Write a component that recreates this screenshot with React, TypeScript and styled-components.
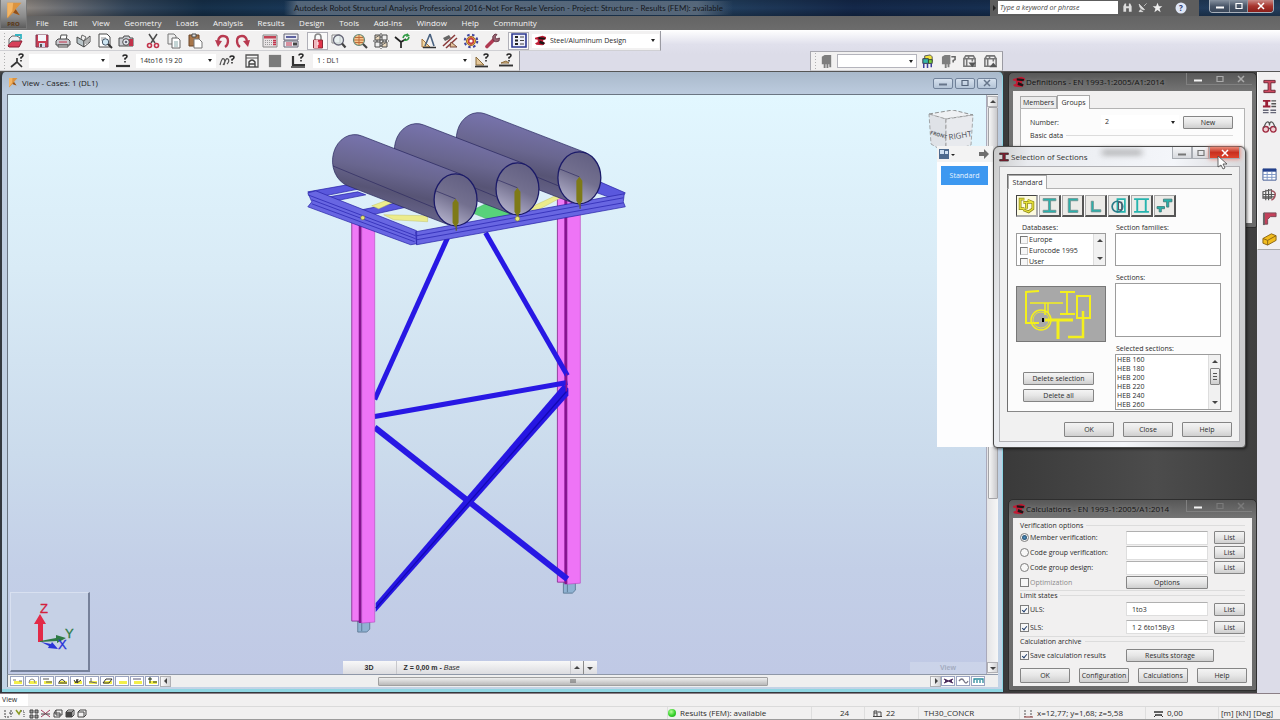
import React from "react";
import styled, { createGlobalStyle, css } from "styled-components";

const Global = createGlobalStyle`
  *, *::before, *::after { box-sizing: border-box; }
  body {
    margin: 0;
    background: #dcdce8;
    color: #2c2c2c;
    font-family: "Open Sans", "Noto Sans", sans-serif;
    font-size: 8px;
    line-height: 10px;
  }
  button, input, select { font: inherit; color: inherit; margin: 0; }
`;

/* ---------- page frame ---------- */

const Page = styled.div`
  display: flex;
  flex-direction: column;
  min-height: 100vh;
  overflow: hidden;
`;

const Header = styled.header`
  display: flex;
  background: linear-gradient(#5b5b5b, #6c6c6c);
`;

const LogoButton = styled.button`
  display: flex;
  flex-direction: column;
  align-items: center;
  width: 27px;
  height: 29px;
  padding: 1px 0 0;
  border: 1px solid #777;
  border-top: 0;
  background: linear-gradient(#b4b4b4, #8a8a8a 60%, #5c5c5c);
  color: #5a3512;
  font-size: 6px;
  font-weight: 700;
  line-height: 6px;
  flex: none;
`;

const HeaderMain = styled.div`
  flex: 1;
  min-width: 0;
`;

const TitleBar = styled.div`
  display: flex;
  height: 16px;
  background: linear-gradient(rgba(0, 0, 0, 0.15), rgba(0, 0, 0, 0) 50%, rgba(0, 0, 0, 0.25)),
    linear-gradient(90deg, #8b8580, #5f6670 4%, #34475c 8%, #16304a 14%, #1a3a5c 24%, #23405f 55%, #14284a 66%, #173153 80%, #26405f);
`;

const AppTitle = styled.h1`
  flex: 1;
  margin: 0;
  font-family: Lato, sans-serif;
  font-size: 8px;
  font-weight: 400;
  line-height: 16px;
  text-align: center;
  white-space: nowrap;
  overflow: hidden;
  color: #14171b;
  span {
    padding: 2px 10px;
    background: linear-gradient(90deg, rgba(100, 116, 134, 0), rgba(104, 118, 134, 0.75) 3%, rgba(104, 118, 134, 0.75) 92%, rgba(100, 116, 134, 0));
  }
`;

const SearchStrip = styled.div`
  display: flex;
  align-items: center;
  width: 209px;
  padding-bottom: 1px;
  background: #5d5d5d;
  color: #eee;
  svg + svg, input + svg { margin-left: 4px; }
  svg:last-child { margin-left: 12px; }
`;

const SearchInput = styled.input`
  width: 120px;
  height: 13px;
  padding: 0 2px;
  border: 0;
  background: #fff;
  color: #333;
  font-size: 7px;
  font-style: italic;
  &::placeholder { color: #444; opacity: 1; }
`;

const CaptionGroup = styled.div`
  display: flex;
  height: 13px;
  margin: 0 6px 0 10px;
  border: 1px solid #a8b0ba;
  border-top: 0;
  border-radius: 0 0 4px 4px;
  overflow: hidden;
`;

const CaptionButton = styled.button<{ $w?: number; $red?: boolean }>`
  display: flex;
  align-items: center;
  justify-content: center;
  width: ${(p) => p.$w ?? 18}px;
  padding: 0;
  border: 0;
  border-right: 1px solid #8b949e;
  background: ${(p) => (p.$red ? "linear-gradient(#c98a86, #a8362f 50%, #8a1d18)" : "linear-gradient(#8792a0, #4a5769 50%, #3a475a)")};
  &:last-child { border-right: 0; }
`;

const MenuBar = styled.nav`
  display: flex;
  align-items: center;
  justify-content: space-between;
  width: 517px;
  height: 14px;
  padding-left: 2px;
  a {
    padding: 0 7px;
    color: #f4f4f4;
    text-decoration: none;
    white-space: nowrap;
  }
`;

const ToolbarArea = styled.div`
  background: linear-gradient(#fff, #e0e0ec 35%, #dcdce8 60%);
  border-bottom: 1px solid #555;
  padding-top: 1px;
  font-size: 7px;
`;

const ToolbarLine = styled.div`
  display: flex;
  justify-content: flex-start;
`;

const Toolbar = styled.div`
  display: flex;
  align-items: center;
  height: 20px;
  padding: 0 1px 0 4px;
  background: #f2f1f1;
  border-right: 1px solid #9a9aa2;
  border-bottom: 1px solid #d0d0d4;
  &::before {
    content: "";
    width: 1px;
    height: 16px;
    margin-right: -1px;
    background: repeating-linear-gradient(#b0b0b0 0 1px, transparent 1px 3px);
  }
`;

const DisplayToolbar = styled(Toolbar)`
  margin-left: auto;
  margin-right: 277px;
  border-left: 1px solid #a8a8b0;
  border-top: 1px solid #a8a8b0;
`;

const ToolGroup = styled.div`
  display: flex;
  & + & { margin-left: 6px; }
`;

const ToolButton = styled.button<{ $on?: boolean; $w?: number }>`
  display: flex;
  align-items: center;
  justify-content: center;
  width: ${(p) => p.$w ?? 21}px;
  height: 18px;
  padding: 0;
  border: 1px solid ${(p) => (p.$on ? "#b0b0b8" : "transparent")};
  background: ${(p) => (p.$on ? "#fafafa" : "transparent")};
  flex: none;
`;

const Combo = styled.div<{ $w: number; $framed?: boolean }>`
  display: grid;
  align-items: center;
  width: ${(p) => p.$w}px;
  height: 14px;
  background: #fff;
  border: 1px solid ${(p) => (p.$framed ? "#b4b4bc" : "#fff")};
  select {
    grid-area: 1 / 1;
    width: 100%;
    height: 12px;
    padding: 0 12px 0 3px;
    border: 0;
    appearance: none;
    background: transparent;
    line-height: 12px;
  }
  &::after {
    content: "";
    grid-area: 1 / 1;
    justify-self: end;
    margin-right: 3px;
    border: 2px solid transparent;
    border-top: 3px solid #222;
    border-bottom: 0;
    pointer-events: none;
  }
`;

const ModuleCombo = styled.div`
  display: flex;
  align-items: center;
  padding-left: 3px;
  margin-left: 3px;
  background: #fff;
`;

const Workspace = styled.main`
  position: relative;
  display: flex;
  flex: 1;
  background: #454545;
`;

/* ---------- 3D view window ---------- */

const ViewWindow = styled.section`
  display: flex;
  flex-direction: column;
  flex: 1;
  min-width: 0;
  padding: 0 5px 3px 5px;
  border: 1px solid #33383e;
  border-width: 0 1px 1px 2px;
  border-radius: 5px 5px 0 0;
  background: linear-gradient(#a9b9cb, #bccbde 22px, #c3d3e6);
  box-shadow: inset 0 -3px 0 #8fd6e2, inset -1px 0 0 #8fd6e2;
`;

const ViewCaption = styled.div`
  display: flex;
  align-items: center;
  height: 22px;
  padding-right: 2px;
  gap: 3px;
  color: #1d1d1d;
  h2 { flex: 1; margin: 0; font-size: 8px; font-weight: 400; }
`;

const ViewCaptionButton = styled.button`
  display: flex;
  align-items: center;
  justify-content: center;
  width: 20px;
  height: 11px;
  margin-right: -1px;
  padding: 0;
  border: 1px solid #71829a;
  border-radius: 2px;
  background: linear-gradient(#d6e1ee, #b4c4d7);
`;

const ViewBody = styled.div`
  display: flex;
  flex: 1;
  min-height: 300px;
  border-top: 1px solid #6b7683;
  border-left: 1px solid #6b7683;
`;

const Canvas = styled.div`
  position: relative;
  flex: 1;
  min-width: 0;
  background: linear-gradient(#e2f7ff, #d9ebf6 30%, #cbdbec 62%, #c3cfe7 82%, #c0c9e5);
`;

const Model = styled.svg`
  position: absolute;
  inset: 0;
  width: 100%;
  height: 100%;
`;

const CubeHolder = styled.div`
  position: absolute;
  top: 15px;
  right: 11px;
`;

const AxisPanel = styled.div`
  position: absolute;
  left: 2px;
  bottom: 2px;
  width: 80px;
  height: 80px;
  border: 1px solid #d8e0f0;
  border-right: 2px solid #76819a;
  border-bottom: 2px solid #76819a;
  background: #c6d1e6;
`;

const LevelBar = styled.div`
  position: absolute;
  left: 34%;
  bottom: 0;
  display: flex;
  align-items: stretch;
  height: 13px;
  margin-left: 2px;
  line-height: 13px;
  background: linear-gradient(#f8f8f8, #dcdce0);
  font-family: "Liberation Sans", sans-serif;
  font-size: 7px;
  font-weight: 700;
`;

const LevelCell = styled.span<{ $w: number }>`
  width: ${(p) => p.$w}px;
  padding-left: 7px;
  border-right: 1px solid #c8c8cc;
  i { font-weight: 400; }
  &:first-child { text-align: center; padding: 0; }
`;

const StepButton = styled.button`
  display: flex;
  align-items: center;
  justify-content: center;
  width: 13px;
  padding: 0;
  border: 0;
  border-right: 1px solid #8a8a8a;
  background: transparent;
  &:last-child { border-right: 0; }
`;

const ViewTag = styled.div`
  position: absolute;
  right: 0;
  bottom: 0;
  width: 76px;
  line-height: 12px;
  text-align: center;
  background: rgba(214, 221, 238, 0.5);
  color: #a3abc0;
  font-family: "Liberation Sans", sans-serif;
  font-size: 7px;
  font-weight: 700;
`;

const VScroll = styled.div`
  display: flex;
  flex-direction: column;
  align-items: center;
  width: 12px;
  padding: 1px 0;
  border-left: 1px solid #aab;
  background: linear-gradient(90deg, #e4e4e6, #f6f6f6);
`;

const VThumb = styled.div`
  width: 10px;
  height: 68%;
  margin-bottom: auto;
  border: 1px solid #a4a4a8;
  border-radius: 1px;
  background: linear-gradient(90deg, #f6f6f6, #c9c9cc);
`;

const ScrollButton = styled.button`
  display: flex;
  align-items: center;
  justify-content: center;
  width: 11px;
  height: 11px;
  padding: 0;
  border: 1px solid #b0b0b4;
  background: linear-gradient(90deg, #fafafa, #d4d4d6);
  flex: none;
`;

const ViewFooter = styled.div`
  display: flex;
  align-items: center;
  height: 13px;
  margin-bottom: 2px;
  padding: 0 12px 0 2px;
  border-top: 1px solid #8f98a8;
  border-left: 1px solid #6b7683;
  background: #efefef;
`;

const DisplayToggle = styled.button`
  display: flex;
  align-items: center;
  justify-content: center;
  width: 14px;
  height: 10px;
  margin-right: 1px;
  padding: 0;
  border: 1px solid #9aa3c0;
  background: #fff;
  flex: none;
`;

const HTrack = styled.div`
  display: flex;
  flex: 1;
  justify-content: center;
  padding: 0 4px;
`;

const HThumb = styled.div`
  display: flex;
  align-items: center;
  justify-content: center;
  width: 52%;
  height: 9px;
  margin-left: 6%;
  border: 1px solid #a0a0a0;
  border-radius: 1px;
  background: linear-gradient(#eeeeee, #b9b9b9);
`;

/* ---------- dialogs ---------- */

const Dock = styled.aside`
  display: flex;
  flex-direction: column;
  justify-content: space-between;
  width: 253px;
  padding: 0 0 2px 4px;
  background: linear-gradient(90deg, #3a3a3a, #4c4c4c 60%, #3f3f3f);
`;

const DarkWindow = styled.section<{ $h: number }>`
  display: flex;
  flex-direction: column;
  min-height: ${(p) => p.$h}px;
  padding: 0 4px 4px;
  border: 1px solid #2e2e2e;
  border-radius: 5px 5px 2px 2px;
  background: linear-gradient(#585858, #747474 18px, #6a6a6a);
`;

const DarkCaption = styled.div`
  display: flex;
  align-items: center;
  gap: 1px;
  height: 18px;
  color: #121212;
  h2 { flex: 1; margin: 0; font-size: 8px; font-weight: 400; text-shadow: 0 0 4px #9c9c9c; }
`;

const DarkButtons = styled.div`
  display: flex;
  align-self: flex-start;
  width: 66px;
  height: 12px;
  border: 1px solid #808080;
  border-top: 0;
  border-right: 0;
`;

const BareButton = styled.button`
  display: flex;
  align-items: center;
  justify-content: center;
  flex: 1;
  padding: 0;
  border: 0;
  background: none;
`;

const WindowBody = styled.div`
  display: flex;
  flex-direction: column;
  flex: 1;
  padding: 3px 7px;
  background: #f1f0f0;
  font-size: 7px;
  line-height: 9px;
`;

const Tabs = styled.div`
  display: flex;
  align-items: flex-end;
`;

const WindowTabs = styled(Tabs)`
  padding-top: 1px;
`;

const Tab = styled.button<{ $active?: boolean; $w: number }>`
  width: ${(p) => p.$w}px;
  height: ${(p) => (p.$active ? 14 : 12)}px;
  margin-bottom: ${(p) => (p.$active ? -1 : 0)}px;
  padding: 0;
  border: 1px solid #a9a9a9;
  border-bottom: 0;
  background: ${(p) => (p.$active ? "#fcfcfc" : "#ececec")};
  line-height: 11px;
  z-index: 1;
`;

const Panel = styled.div`
  display: flex;
  flex-direction: column;
  gap: 2px;
  flex: 1;
  padding: 6px 11px 6px 9px;
  border: 1px solid #b3b3b3;
  background: #fcfcfc;
`;

const FormLine = styled.div`
  display: flex;
  align-items: center;
  gap: 4px;
  height: 14px;
  label { flex: 1; }
`;

const buttonLook = css`
  border: 1px solid #858585;
  border-radius: 1px;
  background: linear-gradient(#f4f4f4, #e6e6e6 50%, #cfcfcf);
`;

const PushButton = styled.button<{ $w?: number; $h?: number }>`
  ${buttonLook}
  width: ${(p) => p.$w ?? 50}px;
  height: ${(p) => p.$h ?? 13}px;
  padding: 0;
  line-height: 9px;
  white-space: nowrap;
  flex: none;
`;

const Legend = styled.h3`
  display: flex;
  align-items: center;
  gap: 3px;
  margin: 0;
  font-size: 7px;
  font-weight: 400;
  &::after { content: ""; flex: 1; border-top: 1px solid #dcdcdc; }
`;

const Field = styled.input`
  width: 82px;
  height: 14px;
  padding: 0 5px;
  border: 1px solid #dedede;
  border-top-color: #b0b0b0;
  background: #fff;
`;

const CheckBox = styled.input`
  width: 9px;
  height: 9px;
  margin-right: 1px;
  appearance: none;
  border: 1px solid #7d7d7d;
  background: #f7f7f7;
  flex: none;
  display: grid;
  place-items: center;
  &:checked::before {
    content: "";
    width: 3px;
    height: 5px;
    border: solid #23406e;
    border-width: 0 1px 1px 0;
    transform: rotate(40deg);
  }
`;

const ListCheck = styled(CheckBox)`
  width: 8px;
  height: 8px;
  margin: 0 0 0 2px;
  border-color: #777 #ccc #ccc #777;
`;

const RadioDot = styled(CheckBox)`
  border-radius: 50%;
  &:checked::before {
    width: 5px;
    height: 5px;
    border: 0;
    border-radius: 50%;
    background: radial-gradient(#4f93c4, #16324f);
    transform: none;
  }
`;

const CalcRow = styled.div<{ $h?: number }>`
  display: grid;
  grid-template-columns: 1fr 82px 31px;
  column-gap: 6px;
  align-items: center;
  height: ${(p) => p.$h ?? 15}px;
`;

const OptionLabel = styled.label<{ $off?: boolean }>`
  display: flex;
  align-items: center;
  color: ${(p) => (p.$off ? "#8b8b8b" : "inherit")};
`;

const WideRow = styled(CalcRow)`
  grid-template-columns: 1fr 88px;
  padding-right: 31px;
`;

const Separator = styled.hr`
  width: 100%;
  margin: 0;
  border: 0;
  border-top: 1px solid #dcdcdc;
`;

const ButtonRow = styled.div`
  display: flex;
  justify-content: space-between;
  gap: 9px;
`;

const DialogButtons = styled(ButtonRow)`
  justify-content: flex-end;
  padding-top: 10px;
`;

const SectionsDialog = styled.section`
  position: absolute;
  top: 74px;
  right: 34px;
  width: 253px;
  padding: 0 5px 5px;
  border: 1px solid #4a4a4a;
  border-radius: 6px 6px 4px 4px;
  background: linear-gradient(100deg, #c9c9c9, #e9ebef 12%, #f4f6fa 60%, #c4c4c6);
  box-shadow: 1px 1px 3px rgba(0, 0, 0, 0.6);
`;

const GlassCaption = styled.div`
  display: flex;
  align-items: center;
  gap: 2px;
  height: 19px;
  h2 { flex: 1; margin: 0; font-size: 8px; font-weight: 400; color: #333; }
`;

const GlassSmudge = styled.div`
  width: 40px;
  height: 3px;
  margin: 0 28px 8px 0;
  background: #777;
  filter: blur(3px);
`;

const GlassButtons = styled.div`
  display: flex;
  align-self: flex-start;
  height: 12px;
`;

const GlassButton = styled.button<{ $w: number; $red?: boolean }>`
  display: flex;
  align-items: center;
  justify-content: center;
  width: ${(p) => p.$w}px;
  padding: 0;
  border: 1px solid #a8acb2;
  border-top: 0;
  background: ${(p) => (p.$red ? "linear-gradient(#e88a78, #c8301f 50%, #e0452c)" : "linear-gradient(#f4f5f7, #d8dade)")};
  box-shadow: ${(p) => (p.$red ? "0 0 4px #f08070" : "none")};
`;

const DialogBody = styled.div`
  padding: 7px 7px 4px;
  border: 1px solid #b0b0b4;
  background: #f1f1f1;
  font-size: 7px;
  line-height: 9px;
`;

const DialogPanel = styled.div`
  display: grid;
  grid-template-columns: 90px 106px;
  column-gap: 9px;
  padding: 6px 8px 1px;
  border: 1px solid #b3b3b3;
  border-left: 1px solid #707070;
  border-bottom-color: #888;
  background: #fcfcfc;
`;

const DialogTabs = styled(Tabs)`
  border-top: 1px solid #666;
  border-left: 1px solid #707070;
`;

const TypeButtons = styled.div`
  grid-column: 1 / -1;
  display: flex;
  gap: 1px;
  margin-bottom: 6px;
`;

const TypeButton = styled.button<{ $on?: boolean }>`
  display: flex;
  align-items: center;
  justify-content: center;
  width: 22px;
  height: 22px;
  padding: 0;
  border: 1px solid #555;
  border-color: ${(p) => (p.$on ? "#444 #aaa #aaa #444" : "#aaa #555 #555 #aaa")};
  border-width: 1px 2px 2px 1px;
  background: ${(p) => (p.$on ? "#fdfbe0" : "#ecebe8")};
`;

const Column = styled.div`
  display: flex;
  flex-direction: column;
`;

const Caption = styled.div<{ $indent?: number }>`
  height: 10px;
  padding-left: ${(p) => p.$indent ?? 1}px;
`;

const ListBox = styled.div<{ $h: number }>`
  display: flex;
  height: ${(p) => p.$h}px;
  margin-bottom: 7px;
  border: 1px solid #9c9c9c;
  background: #fff;
  overflow: hidden;
  &:last-child { margin-bottom: 0; }
  ul { flex: 1; margin: 0; padding: 0 1px; list-style: none; }
`;

const CheckItem = styled.label`
  display: flex;
  align-items: center;
  gap: 1px;
  height: 11px;
`;

const MiniScroll = styled.div`
  display: flex;
  flex-direction: column;
  align-items: center;
  width: 12px;
  padding: 3px 0;
  border-left: 1px solid #ddd;
  background: #f1f1f1;
  gap: 2px;
`;

const MiniThumb = styled.div`
  ${buttonLook}
  width: 10px;
  height: 17px;
  padding: 4px 2px;
  &::before {
    content: "";
    display: block;
    height: 7px;
    background: repeating-linear-gradient(#555 0 1px, transparent 1px 3px);
  }
`;

const Grow = styled.div`
  flex: 1;
`;

const Preview = styled.div`
  height: 56px;
  margin: 13px 0 30px;
  border: 1px solid #777;
  background: #a8a8a8;
`;

const DeleteButtons = styled.div`
  display: flex;
  flex-direction: column;
  gap: 4px;
  padding-left: 7px;
`;

const Flyout = styled.div`
  position: absolute;
  top: 74px;
  right: 287px;
  width: 56px;
  height: 301px;
  background: #fdfdfe;
`;

const FlyoutHead = styled.div`
  display: flex;
  align-items: center;
  justify-content: space-between;
  height: 16px;
  padding: 0 4px 0 2px;
  background: #f3f3f3;
`;

const FlyoutItem = styled.button`
  display: block;
  width: 47px;
  height: 19px;
  margin: 4px 0 0 4px;
  padding: 0;
  border: 0;
  background: #3d98f0;
  color: #e8f4ff;
  font-size: 7px;
`;

const Pointer = styled.svg`
  position: absolute;
  top: 84px;
  right: 52px;
  width: 11px;
  height: 14px;
`;

/* ---------- right toolbar and status ---------- */

const SideBar = styled.aside`
  width: 23px;
  background: #dcdce8;
`;

const SideTools = styled.div`
  display: flex;
  flex-direction: column;
  align-items: center;
  padding: 4px 0 1px;
  background: #f1f0f1;
  border-left: 1px solid #fff;
  border-bottom: 1px solid #aaa;
`;

const SideGroup = styled.div<{ $gap?: number }>`
  display: flex;
  flex-direction: column;
  margin-bottom: ${(p) => p.$gap ?? 0}px;
  button { height: 20px; }
`;

const StatusArea = styled.footer`
  background: #f1f0f0;
  border-top: 1px solid #8b7f86;
  border-bottom: 1px solid #9b9b9b;
`;

const ViewTabs = styled.div`
  display: flex;
  height: 13px;
  border-bottom: 1px solid #dadada;
  button {
    width: 28px;
    padding: 0 0 0 2px;
    border: 0;
    background: #fff;
    text-align: left;
    font-size: 7px;
  }
`;

const StatusLine = styled.div`
  display: flex;
  align-items: center;
  height: 12px;
  padding-left: 4px;
`;

const StatusCell = styled.span<{ $w: number; $pad?: number }>`
  display: flex;
  align-items: center;
  gap: 4px;
  width: ${(p) => p.$w}px;
  height: 12px;
  padding-left: ${(p) => p.$pad ?? 4}px;
  border-left: 1px solid #dedede;
  white-space: nowrap;
`;

const Led = styled.i`
  width: 8px;
  height: 8px;
  border-radius: 50%;
  background: radial-gradient(circle at 40% 35%, #b6ff9a, #35d02a 55%, #1d9a1a);
`;

/* ---------- icons ---------- */

const D = "#4b4b4b";
const R = "#c2324a";
const T = "#25b4ae";

const question = (x: number, y: number) => (
  <g stroke="#222" fill="none" strokeWidth="1.5">
    <path d={`M${x} ${y + 1.5}q0-1.5 2-1.5t2 1.5q0 1.2-2 2v1.2`} />
    <path d={`M${x + 2} ${y + 6}v1.5`} />
  </g>
);

const drawings: Record<string, React.ReactNode> = {
  open: (<><path d="M1 13l3-5h11l-3 6H2z" fill="#d8405a" stroke="#8d1c32" /><path d="M2 11V6l3-3h5l3 2v3H5z" fill="#eef0f4" stroke="#666" /><path d="M8 2h6v4" fill="none" stroke="#35b4c2" strokeWidth="1.800" /></>),
  save: (<><path d="M2 2h12v12H2z" fill="#c93d52" stroke="#7c3a55" /><path d="M4 2h8v6H4z" fill="#f4f6fa" /><path d="M5 10h6v4H5z" fill="#d5dcec" /><path d="M6 11h2v3H6z" fill="#555" /></>),
  print: (<><path d="M5 7l1-5h6l-1 5" fill="#fff" stroke={D} /><path d="M1 8l2-2h10l2 2v4H1z" fill="#c9c9ce" stroke={D} /><path d="M3 12h10v2H3z" fill="#eee" stroke={D} /><path d="M4 9h8" stroke={R} /></>),
  book: (<><path d="M1 4l7 4v6l-7-4z" fill="#b9c4c8" stroke={D} /><path d="M8 8l6-5v6l-6 5z" fill="#fff" stroke={D} /><path d="M5 6l1-4 4 2-2 4M10 6v5M12 5v5" fill="none" stroke="#666" /></>),
  preview: (<><path d="M2 1h8l3 3v10H2z" fill="#fff" stroke={D} /><path d="M4 5h5M4 7h3" stroke="#999" /><circle cx="8.500" cy="9" r="3.200" fill="#cfe6f2" stroke="#456" /><path d="M11 11l4 4" stroke="#333" strokeWidth="2" /></>),
  camera: (<><path d="M1 5h4l1-2h5l1 2h3v8H1z" fill="#c9ccd2" stroke={D} /><path d="M11 6h4v7h-4z" fill={R} /><circle cx="8" cy="9" r="3.300" fill="#e9edf2" stroke={D} /><circle cx="8" cy="9" r="1.300" fill="#667" /></>),
  cut: (<><path d="M4 1l6 9M12 1L6 10" stroke={D} strokeWidth="1.500" /><circle cx="4.500" cy="12.500" r="2" fill="none" stroke={R} strokeWidth="1.600" /><circle cx="11.500" cy="12.500" r="2" fill="none" stroke={R} strokeWidth="1.600" /></>),
  copy: (<><path d="M2 1h6l2 2v8H2z" fill="#eee" stroke="#777" /><path d="M6 5h6l2 2v8H6z" fill="#fff" stroke="#666" /><path d="M8 9h4M8 11h4M8 13h4" stroke="#8aa" /></>),
  paste: (<><path d="M2 2h10v11H2z" fill="#a8764a" stroke="#6a4526" /><path d="M5 1h4v3H5z" fill="#ddd" stroke={D} /><path d="M7 6h5l3 3v6H7z" fill="#fff" stroke="#777" /></>),
  undo: (<><path d="M4 8q1-5 5-5 5 0 5 5 0 4-3 6" fill="none" stroke="#b83a50" strokeWidth="2.300" /><path d="M1 7l7 1-4 6z" fill="#b83a50" /></>),
  redo: (<><path d="M12 8q-1-5-5-5-5 0-5 5 0 4 3 6" fill="none" stroke="#b83a50" strokeWidth="2.300" /><path d="M15 7l-7 1 5 6z" fill="#b83a50" /></>),
  calc: (<><path d="M1 2h14v12H1z" fill="#e7e3e4" stroke="#888" /><path d="M2 3h12v2.500H2z" fill="#c24355" /><path d="M3 7.500h7M3 9.500h7M3 11.500h7" stroke="#999" strokeDasharray="1 1" /><path d="M11 7.500h3M11 9.500h3M11 11.500h3" stroke={R} strokeWidth="1.400" /></>),
  calcList: (<><path d="M1 1h14v6H1zM1 8h14v6H1z" fill="#ececf2" stroke="#667" /><path d="M3 4h10" stroke="#5d62a0" strokeWidth="2" /><path d="M3 10h6M3 12h6" stroke={R} /><path d="M10 11h4" stroke="#444" strokeWidth="3" /></>),
  lock: (<><path d="M5 8V4q0-3 3-3t3 3v4" fill="none" stroke="#888" strokeWidth="1.600" /><path d="M3.500 7h9v8h-9z" fill="#e0344a" stroke="#8c2a36" /><path d="M4 7h4v8H4z" fill="#f0b8be" /><path d="M8 9v3" stroke="#fff" /></>),
  zoom: (<><path d="M1 2h8v8H1z" fill="#fff" stroke="#888" /><circle cx="7.500" cy="7" r="5" fill="#dfeaea" fillOpacity=".7" stroke="#667" strokeWidth="1.300" /><path d="M11 10.500l3.500 4" stroke="#444" strokeWidth="2.200" /></>),
  zoomAll: (<><circle cx="7" cy="7" r="5.500" fill="#f3c88f" stroke="#687" strokeWidth="1.200" /><path d="M2 7h10M7 2v10M3 4.500h8M3 9.500h8" stroke="#c06a3a" /><path d="M11 11l4 4" stroke="#444" strokeWidth="2.200" /></>),
  planes: (<><path d="M2 2h5v5H2zM9 9h5v5H9z" fill="#ead8bc" stroke={D} /><path d="M9 2h5v5H9zM2 9h5v5H2z" fill="#eee" stroke={D} /><path d="M0 8h16M8 0v16" stroke="#444" strokeDasharray="2 1" /><path d="M2 5l5-3M9 12l5-3" stroke="#666" /></>),
  rotate: (<><path d="M1 4l6 5v6M7 9l5-3" stroke="#222" strokeWidth="1.700" fill="none" /><path d="M9 5q1-4 5-3M15 4q-1 4-5 3" stroke="#2f9a43" strokeWidth="1.600" fill="none" /><path d="M13 0l3 3-4 1z" fill="#2f9a43" /></>),
  drafting: (<><path d="M1 14V6l8 8z" fill="#f3d9a4" stroke="#a6743c" /><path d="M9 1l-5 12M9 1l4 12" stroke="#4a6280" strokeWidth="1.600" /><path d="M2 14.500h13" stroke="#333" strokeWidth="1.500" /></>),
  frames: (<><path d="M1 13L13 2M4 15L15 5" stroke="#8a3b3b" strokeWidth="1.600" /><path d="M1 5l6-3 2 3-6 3z" fill="#666" /><path d="M9 9l6 5H8z" fill="#e2c39b" stroke="#7a4a3a" /></>),
  gears: (<><circle cx="8" cy="8" r="4.500" fill="#f0b53c" stroke="#a06424" /><circle cx="8" cy="8" r="6.300" fill="none" stroke="#40459c" strokeWidth="2" strokeDasharray="2.500 2.500" /><path d="M5 6l3-2 3 2v4l-3 2-3-2z" fill="#c23d48" /><circle cx="8" cy="8" r="1.600" fill="#fff" /></>),
  wrench: (<><path d="M3 13.500l7-7" stroke="#b03a52" strokeWidth="3.600" strokeLinecap="round" /><path d="M11 1q-3.500 2-2 5.500t6 1.500l.5-3-3 1-1.500-2 2-2.500z" fill="#9a6472" stroke="#5a2a38" strokeWidth=".8" /></>),
  manager: (<><path d="M1 1h14v13H1z" fill="#eef0fa" stroke="#2b3790" strokeWidth="1.600" /><path d="M4 4h3M4 7.500h3M4 11h3" stroke="#222" strokeWidth="1.800" /><path d="M9 4h4M9 7.500h4M9 11h4" stroke="#444" /></>),
  beam: (<><path d="M0 4l11-3 5 2v3l-4 1v3l3 2-4 3-9-1-2-2 4-2V7L0 6z" fill="#c01c34" /><path d="M5 3l10 1-1 3-9-1zM7 8l7 3-1 3-7-2z" fill="#1e1416" /></>),
  nodeQ: (<><path d="M8 5v4l-6 5M8 9l5 5" stroke="#333" strokeWidth="1.700" fill="none" />{question(10, 1)}</>),
  barQ: (<><path d="M1 13h14" stroke="#333" strokeWidth="2.200" />{question(8, 2)}</>),
  curveQ: (<><path d="M1 12q2-8 4-6t-1 6M5 12q2-8 4-6t-1 5" stroke="#555" strokeWidth="1.200" fill="none" />{question(11, 3)}</>),
  portal: (<><path d="M2 2h12v12H2z" fill="#f4f4f4" stroke="#555" strokeWidth="1.300" /><path d="M2 5h12" stroke="#555" /><path d="M5 14V9q3-4 6 0v5M5 11h6" fill="none" stroke="#444" strokeWidth="1.400" /></>),
  block: <path d="M1 1h14v14H1z" fill="#7b7b7b" />,
  caseQ: (<><path d="M3 3v9h12" fill="none" stroke="#333" strokeWidth="2.200" /><path d="M1 14h14" stroke="#333" strokeWidth="1.500" />{question(9, 1)}</>),
  resultQ: (<><path d="M2 4v8l8 0z" fill="#e5c89a" stroke="#8a6a3a" /><path d="M1 13.500h13" stroke="#333" strokeWidth="1.700" />{question(10, 1)}</>),
  loadQ: (<><path d="M3 10l5-2 3 2z" fill="#e5c89a" stroke="#8a6a3a" /><path d="M1 12.500h14" stroke="#333" strokeWidth="1.900" />{question(9, 1)}</>),
  chair: <path d="M3 3l3-2h7v13h-2v-3h-1v4H8v-4H7v4H5v-4H3z" fill="#7e7e7e" />,
  chairColor: (<><path d="M5 2l6-1 2 2v5H5z" fill="#f0e23a" stroke="#555" /><path d="M3 5h6v5H3z" fill="#35b5a8" stroke="#334" /><path d="M9 6h4v4H9z" fill="#7dd23c" stroke="#343" /><path d="M4 10v5M8 10v5M12 10v4" stroke="#3c3f9c" strokeWidth="1.600" /></>),
  chairQ: (<><path d="M1 3l3-2h6v10H9v3H7v-3H6v4H4v-4H1z" fill="#7e7e7e" /><path d="M11 3h4v3l-2 1v2" fill="none" stroke="#666" strokeWidth="1.700" /></>),
  panelDown: (<><path d="M2 5h12v8H2zM2 5l2-3h8l2 3M5 5v8M11 5v3M7 2v3" fill="none" stroke="#777" strokeWidth="1.700" /><path d="M7 9h8l-4 5z" fill="#555" /></>),
  panelUp: (<><path d="M2 5h12v8H2zM2 5l2-3h8l2 3M5 5v8M11 5v3M7 2v3" fill="none" stroke="#777" strokeWidth="1.700" /><path d="M7 14h8l-4-5z" fill="#555" /></>),
  section: <path d="M2 1.500h12v2.500H9.500v8H14v2.500H2V12h4.500V4H2z" fill="#d04a60" stroke="#6e2836" />,
  sectionDark: <path d="M1 1.500h14v2.500H10v8h5v2.500H1V12h5V4H1z" fill="#8a1c30" stroke="#222" />,
  sectionList: (<><path d="M1 1h8v2H6.500v4H9v2H1V7h2.500V3H1z" fill="#9a1f36" /><path d="M10 2h5M10 5h5M10 8h5" stroke="#555" strokeWidth="1.500" /><path d="M1 12h6M1 14.500h6M9 12h6M9 14.500h6" stroke="#667" strokeWidth="1.500" /></>),
  glasses: (<><circle cx="4" cy="11" r="3" fill="#f0d0d4" stroke="#a02c42" strokeWidth="1.400" /><circle cx="12" cy="11" r="3" fill="#f0d0d4" stroke="#a02c42" strokeWidth="1.400" /><path d="M2 9q2-6 4-6t2 4M14 9q-2-6-4-6t-2 4M7 10h2" fill="none" stroke="#555" strokeWidth="1.300" /></>),
  tableIcon: (<><path d="M1 2h14v12H1z" fill="#fff" stroke="#3c5690" /><path d="M1 2h14v3H1z" fill="#23408c" /><path d="M1 8h14M1 11h14M5.500 5v9M10.500 5v9" stroke="#7d95c4" /></>),
  gridIcon: (<><path d="M1 5l9-2v9l-9 0zM4 3v11M7 2v12M1 8h13M1 10.500h13" fill="none" stroke="#555" strokeWidth="1.200" /><path d="M10 4q5 1 4 5t-4 5" fill="none" stroke="#a0505c" strokeWidth="1.600" /></>),
  bracket: (<><path d="M2 2h13v4H9L6 9v5H2z" fill="#c4405a" stroke="#7a4a56" /><path d="M2 2v13" stroke="#666" strokeWidth="2" /></>),
  brick: (<><path d="M1 8l9-5 5 2v5l-9 5-5-2z" fill="#f2bc1c" stroke="#8a6412" /><path d="M1 8l5 2 9-5M6 10v5" fill="none" stroke="#8a6412" /></>),
  profiles: (<><path d="M6 2H2v9h4M5 5h9M8 5v6M9 3l5 2v6l-4 3-5-2" fill="none" stroke="#8f8a1a" strokeWidth="2.600" /><path d="M6 2H2v9h4M5 5h9M8 5v6M9 3l5 2v6l-4 3-5-2" fill="none" stroke="#e8e23a" strokeWidth="1.200" /></>),
  iShape: <path d="M2 1.500h12v2H9v9h5v2H2v-2h5v-9H2z" fill={T} stroke="#6f8f8e" strokeWidth=".8" />,
  cShape: <path d="M4 1.500h9v2H6v9h7v2H4z" fill={T} stroke="#6f8f8e" strokeWidth=".8" />,
  lShape: <path d="M4 4h2v8h7v2H4z" fill={T} stroke="#6f8f8e" strokeWidth=".8" />,
  tube: (<><path d="M7 2h7v12H7z" fill="#e8f2f0" stroke={T} strokeWidth="1.600" /><circle cx="7" cy="9" r="5" fill="none" stroke="#2c7a88" strokeWidth="1.600" /><path d="M8 5h3v7H8z" fill="none" stroke="#556" /></>),
  pair: <path d="M1 2h14M1 14h14M4 2v12M12 2v12" fill="none" stroke={T} strokeWidth="1.800" />,
  special: <path d="M7 2h8v2.500h-3v5h-2v-5H7zM1 9h7v2H5v3H3v-3H1z" fill={T} stroke="#3c7876" strokeWidth=".8" />,
  binoculars: <path d="M2 14V6l2-4h2v12zM10 14V2h2l2 4v8zM6 6h4v3H6z" fill="#ddd" />,
  dish: <path d="M3 3l8 8q-6 2-8-8zM10 6l4-4M5 11l-2 3h6" fill="#ddd" stroke="#ddd" />,
  star: <path d="M8 1l2 5h5l-4 3.500 1.500 5.500L8 11.500 3.500 15 5 9.500 1 6h5z" fill="#eee" />,
};

function Icon({ name, size = 16 }: { name: string; size?: number }) {
  return (
    <svg width={size} height={size} viewBox="0 0 16 16" fill="none" aria-hidden="true">
      {drawings[name]}
    </svg>
  );
}

function Arrow({ dir, color = "#444" }: { dir: "up" | "down" | "left" | "right"; color?: string }) {
  const d = { up: "M1 5h6L4 2z", down: "M1 3h6L4 6z", left: "M5 1v6L2 4z", right: "M3 1v6l3-3z" }[dir];
  return (
    <svg width="8" height="8" viewBox="0 0 8 8" aria-hidden="true"><path d={d} fill={color} /></svg>
  );
}

function Glyph({ kind, color }: { kind: "min" | "max" | "close"; color: string }) {
  return (
    <svg width="10" height="8" viewBox="0 0 10 8" fill="none" stroke={color} strokeWidth="1.500" aria-hidden="true">
      {kind === "min" && <path d="M1 5.500h8" strokeWidth="2" />}
      {kind === "max" && <path d="M2 1.500h6v5H2z" strokeWidth="1.200" />}
      {kind === "close" && <path d="M2 1l6 6M8 1L2 7" />}
    </svg>
  );
}

function RobotMark({ size }: { size: number }) {
  return (
    <svg width={size} height={size} viewBox="0 0 24 24" aria-hidden="true">
      <path d="M4 2h17l-7 8 5 7-8-3-7 7z" fill="#dc9440" />
      <path d="M4 2h7l-1 10-6 8z" fill="#f3b565" />
      <path d="M14 10l5 7-8-3z" fill="#8f4f1c" />
    </svg>
  );
}

const menus = ["File", "Edit", "View", "Geometry", "Loads", "Analysis", "Results", "Design", "Tools", "Add-Ins", "Window", "Help", "Community"];

const toolGroups = [
  ["open"],
  ["save", "print", "book", "preview", "camera"],
  ["cut", "copy", "paste"],
  ["undo", "redo"],
  ["calc", "calcList"],
  ["lock", "zoom", "zoomAll", "planes", "rotate"],
  ["drafting", "frames", "gears", "wrench"],
  ["manager"],
];

const togglePaths = [
  { d: "M1 3h3M7 4h3", c: "#777" },
  { d: "M2 6q0-4 3-4t3 4", c: "#888" },
  { d: "M1 2h6M4 5h6", c: "#555" },
  { d: "M2 5q3-5 6 0M1 6h9", c: "#333" },
  { d: "M2 3l2 3 1-4M6 2l-1 4 4-3", c: "#333" },
  { d: "M4 1v4l6 1M2 5l2 0", c: "#666" },
  { d: "M1 6l3-4h6l-3 4z", c: "#333" },
  { d: "", c: "#888" },
  { d: "M1 2h8", c: "#557" },
  { d: "M1 2h4M3 0v6M6 5h4", c: "#232" },
];

/* ---------- 3D model ---------- */

const pipes = [
  { x: 580, y: 178 },
  { x: 518, y: 189 },
  { x: 456, y: 200 },
];

function PipeBody({ x, y }: { x: number; y: number }) {
  const bx = x - 101;
  const by = y - 39;
  return (
    <g stroke="#26245c">
      <path d={`M${bx + 7} ${by - 25}L${x + 7} ${y - 25}L${x - 7} ${y + 25}L${bx - 7} ${by + 25}A22 26 0 0 1 ${bx + 7} ${by - 25}z`} fill="url(#pipe)" strokeWidth=".7" />
      <path d={`M${bx - 22} ${by + 5}L${x - 21} ${y + 8}`} strokeWidth=".6" />
    </g>
  );
}

function PipeEnd({ x, y }: { x: number; y: number }) {
  return (
    <g>
      <ellipse cx={x} cy={y} rx="21.500" ry="26" fill="url(#pipeEnd)" stroke="#1b1a68" strokeWidth="1.300" />
      <path d={`M${x - 20} ${y - 9}L${x} ${y - 1}`} stroke="#26245c" strokeWidth=".6" />
      <path d={`M${x - 3} ${y + 3}l3-4 3 4v20l-3 5-3-5z`} fill="#7e7a16" />
      <path d={`M${x} ${y + 26}h1.500v5h-1.500z`} fill="#5c5c4c" />
    </g>
  );
}

function Column3D({ x, top, bottom }: { x: number; top: number; bottom: number }) {
  return (
    <g>
      <path d={`M${x + 6} ${bottom - 2}h12v8l-3 3h-9z`} fill="#8fb2d2" stroke="#53708c" strokeWidth=".8" />
      <path d={`M${x + 10} ${bottom}v8`} stroke="#53708c" strokeWidth=".8" />
      <path d={`M${x} ${top}h8v${bottom - top - 2}h-8z`} fill="#f07af6" stroke="#7d2688" strokeWidth=".8" />
      <path d={`M${x + 7} ${top}h3v${bottom - top}h-3z`} fill="#86128f" />
      <path d={`M${x + 10} ${top}h13v${bottom - top - 1}l-13 1z`} fill="#ee74f6" stroke="#b448bc" strokeWidth=".6" />
    </g>
  );
}

function Structure() {
  return (
    <Model viewBox="8 95 979 580" preserveAspectRatio="xMidYMid meet" role="img" aria-label="Pipe rack model">
      <defs>
        <linearGradient id="pipe" gradientUnits="objectBoundingBox" x1=".6" y1="0.150" x2=".4" y2=".85">
          <stop offset="0" stopColor="#7672aa" />
          <stop offset=".4" stopColor="#69668f" />
          <stop offset=".7" stopColor="#575475" />
          <stop offset="1" stopColor="#67648a" />
        </linearGradient>
        <linearGradient id="pipeEnd" x1=".7" y1="0" x2=".3" y2="1">
          <stop offset="0" stopColor="#625f82" />
          <stop offset=".5" stopColor="#73708f" />
          <stop offset="1" stopColor="#b4b2cc" />
        </linearGradient>
      </defs>
      <Column3D x={558} top={194} bottom={585} />
      <g fill="#5a58dd" stroke="#2521a6" strokeWidth=".7">
        <path d="M308 192l45-8 12 4-50 10z" />
        <path d="M580 173l46 20-6 8-50-18z" />
        <path d="M318 199l40-7 8 3-40 8z" />
        <path d="M362 210l50-10 10 4-50 11z" />
      </g>
      <path d="M372 206l22-8 5 2-20 9zM384 215l44 1v6l-34-2zM528 209l30-14 5 2-26 14z" fill="#ecec8c" stroke="#c2c26a" strokeWidth=".5" />
      <path d="M470 212l20-10 30 9 10 3-38 7z" fill="#58d27a" stroke="#3fae60" strokeWidth=".5" />
      <g stroke="#2818e4" strokeWidth="5" fill="none">
        <path d="M448 238L375 400" />
        <path d="M486 233L568 376" />
        <path d="M375 417L568 383" />
        <path d="M375 428L568 580" strokeWidth="6" />
      </g>
      <path d="M564 385l5 4v7L376 613v-9z" fill="#2616e2" />
      <path d="M568 391L376 609" stroke="#1409b4" strokeWidth="1.300" />
      <Column3D x={352} top={216} bottom={624} />
      <path d="M567 374v18" stroke="#86128f" strokeWidth="1.500" />
      {pipes.map((p) => <PipeBody key={p.x} {...p} />)}
      <g fill="#6866e2" stroke="#2521a6" strokeWidth=".7">
        <path d="M308 193l8-2 101 40v13l-6 1-103-38 4-5z" />
        <path d="M416 232l209-38-1 8 2 5-209 38z" />
      </g>
      <g stroke="#2d29b4" strokeWidth=".8" fill="none">
        <path d="M308 195l108 41M312 200l104 39M312 204l103 38M417 236l207-38M417 240l207-37M417 232v13" />
      </g>
      {pipes.map((p) => <PipeEnd key={p.x} {...p} />)}
      <g fill="#e6e67a" stroke="#8a872e" strokeWidth=".6">
        <circle cx="363" cy="218" r="2" />
        <circle cx="518" cy="219" r="2.300" />
      </g>
    </Model>
  );
}

function ViewCube() {
  return (
    <CubeHolder>
      <svg width="48" height="46" viewBox="0 0 48 46" role="img" aria-label="View cube">
        <path d="M2 4L26 0l20 5-28 4z" fill="#eff1f4" stroke="#777" strokeWidth=".8" strokeDasharray="4 2" />
        <path d="M2 4l17 5v34L4 34z" fill="#dfe2e7" stroke="#888" strokeWidth=".7" strokeDasharray="4 2" />
        <path d="M19 9l27-4-2 30-25 8z" fill="#e8eaee" stroke="#888" strokeWidth=".7" strokeDasharray="4 2" />
        <text x="3" y="24" fontSize="5" fontWeight="700" fill="#5b5f66" transform="rotate(16 3 24)">FRONT</text>
        <text x="22" y="30" fontSize="8" fill="#4d5158" transform="rotate(-9 22 30)">RIGHT</text>
      </svg>
    </CubeHolder>
  );
}

function Axes() {
  return (
    <AxisPanel>
      <svg width="78" height="78" viewBox="0 0 78 78" role="img" aria-label="Coordinate axes" fontFamily="Liberation Sans, sans-serif" fontSize="13">
        <path d="M27 48V30h-4l6-10 6 10h-3v18z" fill="#e22a48" transform="translate(0 1)" />
        <path d="M29 48l16-3v-3l10 3-9 5v-2l-17 1z" fill="#2e7a45" />
        <path d="M30 49l10 2 1-2 6 7-10-1 1-2z" fill="#2a35d8" />
        <text x="29" y="20" fill="#d3203c" stroke="#d3203c" strokeWidth=".3">Z</text>
        <text x="54" y="45" fill="#2e7a45" stroke="#2e7a45" strokeWidth=".3">Y</text>
        <text x="47" y="56" fill="#2430d8" stroke="#2430d8" strokeWidth=".3">X</text>
      </svg>
    </AxisPanel>
  );
}

function SectionsPreview() {
  return (
    <Preview>
      <svg width="88" height="54" viewBox="0 0 88 54" fill="none" stroke="#f4f01c" strokeWidth="2" role="img" aria-label="Section shapes">
        <path d="M22 4l-13 1v31l13 0" />
        <path d="M13 16h33M28 16v12M31 16v10" strokeWidth="1.500" />
        <path d="M43 5h15M50 5v22M43 27h15" strokeWidth="1.800" />
        <path d="M60 9h13v22H60z" />
        <circle cx="24" cy="33" r="10" strokeWidth="1.500" />
        <circle cx="24" cy="33" r="8" strokeWidth=".8" />
        <path d="M28 33h28" strokeWidth="3" />
        <path d="M41 34v18" strokeWidth="3" />
        <path d="M66 24v26H51" strokeWidth="2.500" />
        <path d="M26 31v4" stroke="#000" />
      </svg>
    </Preview>
  );
}

/* ---------- windows ---------- */

function DarkTitle({ text, faded }: { text: string; faded?: boolean }) {
  const c = faded ? "#7a7a7a" : "#aaa";
  return (
    <DarkCaption>
      <Icon name="beam" size={12} />
      <h2>{text}</h2>
      <DarkButtons>
        <BareButton aria-label="Minimize"><Glyph kind="min" color="#f4f4f4" /></BareButton>
        <BareButton aria-label="Maximize"><Glyph kind="max" color={c} /></BareButton>
        <BareButton aria-label="Close"><Glyph kind="close" color={c} /></BareButton>
      </DarkButtons>
    </DarkCaption>
  );
}

function Definitions() {
  return (
    <DarkWindow $h={156}>
      <DarkTitle text="Definitions - EN 1993-1:2005/A1:2014" />
      <WindowBody>
        <WindowTabs>
          <Tab $w={37}>Members</Tab>
          <Tab $w={33} $active>Groups</Tab>
        </WindowTabs>
        <Panel>
          <FormLine>
            <label htmlFor="group-number">Number:</label>
            <Combo $w={78}><select id="group-number"><option>2</option></select></Combo>
            <PushButton $w={50}>New</PushButton>
          </FormLine>
          <Legend>Basic data</Legend>
        </Panel>
      </WindowBody>
    </DarkWindow>
  );
}

function Calculations() {
  return (
    <DarkWindow $h={192}>
      <DarkTitle text="Calculations - EN 1993-1:2005/A1:2014" faded />
      <WindowBody>
        <Legend>Verification options</Legend>
        {["Member verification:", "Code group verification:", "Code group design:"].map((t, i) => (
          <CalcRow key={t}>
            <OptionLabel><RadioDot type="radio" name="mode" defaultChecked={i === 0} />{t}</OptionLabel>
            <Field aria-label={t} />
            <PushButton $w={31}>List</PushButton>
          </CalcRow>
        ))}
        <CalcRow>
          <OptionLabel $off><CheckBox type="checkbox" disabled />Optimization</OptionLabel>
          <PushButton $w={82}>Options</PushButton>
        </CalcRow>
        <Separator />
        <Legend>Limit states</Legend>
        {[["ULS:", "1to3"], ["SLS:", "1 2 6to15By3"]].map(([t, v]) => (
          <CalcRow key={t} $h={18}>
            <OptionLabel><CheckBox type="checkbox" defaultChecked />{t}</OptionLabel>
            <Field aria-label={t} defaultValue={v} />
            <PushButton $w={31}>List</PushButton>
          </CalcRow>
        ))}
        <Separator />
        <Legend>Calculation archive</Legend>
        <WideRow $h={18}>
          <OptionLabel><CheckBox type="checkbox" defaultChecked />Save calculation results</OptionLabel>
          <PushButton $w={88}>Results storage</PushButton>
        </WideRow>
        <Grow />
        <ButtonRow>
          {["OK", "Configuration", "Calculations", "Help"].map((t) => (
            <PushButton key={t} $h={15}>{t}</PushButton>
          ))}
        </ButtonRow>
      </WindowBody>
    </DarkWindow>
  );
}

function SelectionOfSections() {
  const types = ["profiles", "iShape", "cShape", "lShape", "tube", "pair", "special"];
  return (
    <SectionsDialog role="dialog" aria-label="Selection of Sections">
      <GlassCaption>
        <Icon name="sectionDark" size={10} />
        <h2>Selection of Sections</h2>
        <GlassSmudge />
        <GlassButtons>
          <GlassButton $w={20} aria-label="Minimize"><Glyph kind="min" color="#777" /></GlassButton>
          <GlassButton $w={17} aria-label="Maximize"><Glyph kind="max" color="#777" /></GlassButton>
          <GlassButton $w={31} $red aria-label="Close"><Glyph kind="close" color="#fff" /></GlassButton>
        </GlassButtons>
      </GlassCaption>
      <DialogBody>
        <DialogTabs><Tab $w={39} $active>Standard</Tab></DialogTabs>
        <DialogPanel>
          <TypeButtons>
            {types.map((t, i) => (
              <TypeButton key={t} $on={i === 0} aria-label={t}><Icon name={t} size={17} /></TypeButton>
            ))}
          </TypeButtons>
          <Column>
            <Caption $indent={6}>Databases:</Caption>
            <ListBox $h={33}>
              <ul>
                {["Europe", "Eurocode 1995", "User"].map((t) => (
                  <li key={t}><CheckItem><ListCheck type="checkbox" />{t}</CheckItem></li>
                ))}
              </ul>
              <MiniScroll><Arrow dir="up" /><Grow /><Arrow dir="down" /></MiniScroll>
            </ListBox>
            <SectionsPreview />
            <DeleteButtons>
              <PushButton $w={71}>Delete selection</PushButton>
              <PushButton $w={71}>Delete all</PushButton>
            </DeleteButtons>
          </Column>
          <Column>
            <Caption>Section families:</Caption>
            <ListBox $h={33} />
            <Caption>Sections:</Caption>
            <ListBox $h={54} />
            <Caption>Selected sections:</Caption>
            <ListBox $h={56}>
              <ul>
                {[160, 180, 200, 220, 240, 260].map((n) => <li key={n}>HEB {n}</li>)}
              </ul>
              <MiniScroll><Arrow dir="up" /><MiniThumb /><Grow /><Arrow dir="down" /></MiniScroll>
            </ListBox>
          </Column>
        </DialogPanel>
        <DialogButtons>
          {["OK", "Close", "Help"].map((t) => <PushButton key={t} $h={15}>{t}</PushButton>)}
        </DialogButtons>
      </DialogBody>
    </SectionsDialog>
  );
}

function View() {
  return (
    <ViewWindow>
      <ViewCaption>
        <RobotMark size={12} />
        <h2>View - Cases: 1 (DL1)</h2>
        <ViewCaptionButton aria-label="Minimize"><Glyph kind="min" color="#66758a" /></ViewCaptionButton>
        <ViewCaptionButton aria-label="Maximize"><Glyph kind="max" color="#55647a" /></ViewCaptionButton>
        <ViewCaptionButton aria-label="Close"><Glyph kind="close" color="#66758a" /></ViewCaptionButton>
      </ViewCaption>
      <ViewBody>
        <Canvas>
          <Structure />
          <ViewCube />
          <Axes />
          <LevelBar>
            <LevelCell $w={54}>3D</LevelCell>
            <LevelCell $w={174}>Z = 0,00 m - <i>Base</i></LevelCell>
            <StepButton aria-label="Level up"><Arrow dir="up" /></StepButton>
            <StepButton aria-label="Level down"><Arrow dir="down" /></StepButton>
          </LevelBar>
          <ViewTag>View</ViewTag>
        </Canvas>
        <VScroll>
          <ScrollButton aria-label="Scroll up"><Arrow dir="up" /></ScrollButton>
          <VThumb />
          <ScrollButton aria-label="Scroll down"><Arrow dir="down" /></ScrollButton>
        </VScroll>
      </ViewBody>
      <ViewFooter>
        {togglePaths.map((t, i) => (
          <DisplayToggle key={i} aria-label={`Display attribute ${i + 1}`}>
            <svg width="11" height="8" viewBox="0 0 11 8">
              <path d="M2 4h8v3H2z" fill="#f2ee4a" />
              <path d={t.d} fill="none" stroke={t.c} />
            </svg>
          </DisplayToggle>
        ))}
        <ScrollButton aria-label="Scroll left"><Arrow dir="left" /></ScrollButton>
        <HTrack><HThumb>
          <svg width="6" height="4" viewBox="0 0 6 4"><path d="M1 0v4M3 0v4M5 0v4" stroke="#444" strokeWidth=".8" /></svg>
        </HThumb></HTrack>
        <ScrollButton aria-label="Scroll right"><Arrow dir="right" /></ScrollButton>
        {["M1 2l9 4M1 6l9-4M2 4h7", "M1 4q3-4 5 0t4 0", "M1 6V2h9v4M4 3v3M7 3v3"].map((d, i) => (
          <DisplayToggle key={d} aria-label={`Diagram ${i + 1}`}>
            <svg width="11" height="8" viewBox="0 0 11 8"><path d={d} fill="none" stroke={["#4a2a5a", "#778", "#2a8a9c"][i]} strokeWidth="1.300" /></svg>
          </DisplayToggle>
        ))}
      </ViewFooter>
    </ViewWindow>
  );
}

export default function App() {
  return (
    <Page>
      <Global />
      <Header>
        <LogoButton aria-label="Application menu"><RobotMark size={20} />PRO</LogoButton>
        <HeaderMain>
          <TitleBar>
            <AppTitle><span>Autodesk Robot Structural Analysis Professional 2016-Not For Resale Version - Project: Structure - Results (FEM): available</span></AppTitle>
            <SearchStrip>
              <Arrow dir="right" color="#222" />
              <SearchInput placeholder="Type a keyword or phrase" aria-label="Search" />
              <Icon name="binoculars" size={11} />
              <Icon name="dish" size={11} />
              <Icon name="star" size={11} />
              <svg width="12" height="12" viewBox="0 0 12 12" aria-label="Help">
                <circle cx="6" cy="6" r="5.500" fill="#dfe6f6" />
                <text x="6" y="9" fontSize="8" fontWeight="700" textAnchor="middle" fill="#26386e">?</text>
              </svg>
            </SearchStrip>
            <CaptionGroup>
              <CaptionButton $w={20} aria-label="Minimize"><Glyph kind="min" color="#fff" /></CaptionButton>
              <CaptionButton $w={18} aria-label="Restore"><Glyph kind="max" color="#fff" /></CaptionButton>
              <CaptionButton $w={25} $red aria-label="Close"><Glyph kind="close" color="#fff" /></CaptionButton>
            </CaptionGroup>
          </TitleBar>
          <MenuBar>
            {menus.map((m) => <a key={m} href="#menu">{m}</a>)}
          </MenuBar>
        </HeaderMain>
      </Header>

      <ToolbarArea>
        <ToolbarLine>
          <Toolbar>
            {toolGroups.map((g, i) => (
              <ToolGroup key={i}>
                {g.map((n) => (
                  <ToolButton key={n} $on={n === "lock" || n === "manager"} aria-label={n}><Icon name={n} /></ToolButton>
                ))}
              </ToolGroup>
            ))}
            <ModuleCombo>
              <Icon name="beam" size={11} />
              <Combo $w={113}><select aria-label="Module" defaultValue="s"><option value="s">Steel/Aluminum Design</option></select></Combo>
            </ModuleCombo>
          </Toolbar>
        </ToolbarLine>
        <ToolbarLine>
          <Toolbar>
            <ToolButton aria-label="Nodes" $w={25}><Icon name="nodeQ" /></ToolButton>
            <Combo $w={80}><select aria-label="Node selection"><option></option></select></Combo>
            <ToolButton aria-label="Bars" $w={27}><Icon name="barQ" /></ToolButton>
            <Combo $w={80}><select aria-label="Bar selection"><option>14to16 19 20</option></select></Combo>
            <ToolButton aria-label="Objects"><Icon name="curveQ" /></ToolButton>
            <ToolButton aria-label="Special selection" $w={30}><Icon name="portal" /></ToolButton>
            <ToolButton aria-label="Filter" $w={16}><Icon name="block" /></ToolButton>
            <ToolButton aria-label="Cases" $w={30}><Icon name="caseQ" /></ToolButton>
            <Combo $w={158}><select aria-label="Load case"><option>1 : DL1</option></select></Combo>
            <ToolButton aria-label="Case results" $w={22}><Icon name="resultQ" /></ToolButton>
            <ToolButton aria-label="Modes" $w={25}><Icon name="loadQ" /></ToolButton>
          </Toolbar>
          <DisplayToolbar>
            <ToolButton aria-label="Structure" $w={22}><Icon name="chair" size={15} /></ToolButton>
            <Combo $w={80} $framed><select aria-label="Part"><option></option></select></Combo>
            <ToolButton aria-label="Colours"><Icon name="chairColor" size={15} /></ToolButton>
            <ToolButton aria-label="Structure query"><Icon name="chairQ" size={15} /></ToolButton>
            <ToolButton aria-label="Storey down"><Icon name="panelDown" size={15} /></ToolButton>
            <ToolButton aria-label="Storey up"><Icon name="panelUp" size={15} /></ToolButton>
          </DisplayToolbar>
        </ToolbarLine>
      </ToolbarArea>

      <Workspace>
        <View />
        <Dock>
          <Definitions />
          <Calculations />
        </Dock>
        <SideBar>
          <SideTools>
            <SideGroup $gap={28}>
              {["section", "sectionList", "glasses"].map((n) => <ToolButton key={n} aria-label={n}><Icon name={n} size={15} /></ToolButton>)}
            </SideGroup>
            <SideGroup $gap={4}>
              {["tableIcon", "gridIcon"].map((n) => <ToolButton key={n} aria-label={n}><Icon name={n} size={15} /></ToolButton>)}
            </SideGroup>
            <SideGroup>
              {["bracket", "brick"].map((n) => <ToolButton key={n} aria-label={n}><Icon name={n} size={15} /></ToolButton>)}
            </SideGroup>
          </SideTools>
        </SideBar>
        <Flyout>
          <FlyoutHead>
            <svg width="16" height="10" viewBox="0 0 16 10"><path d="M0 0h10v10H0z" fill="#4d6a8f" /><path d="M1 1h4v4H1zM6 2h3v3H6z" fill="#cfe0f2" /><path d="M12 5h4l-2 2z" fill="#222" /></svg>
            <svg width="10" height="10" viewBox="0 0 10 10"><path d="M0 3h5V0l5 5-5 5V7H0z" fill="#6f6f6f" /></svg>
          </FlyoutHead>
          <FlyoutItem>Standard</FlyoutItem>
        </Flyout>
        <SelectionOfSections />
        <Pointer viewBox="0 0 11 14" aria-hidden="true">
          <path d="M1 0v11l3-2 2 4 2-1-2-4h4z" fill="#fff" stroke="#444" strokeWidth=".8" />
        </Pointer>
      </Workspace>

      <StatusArea>
        <ViewTabs><button>View</button></ViewTabs>
        <StatusLine>
          <svg width="90" height="11" viewBox="0 0 90 11" fill="none" stroke="#444" aria-hidden="true">
            <path d="M1 2v7h4M7 2v7M5 5h4" strokeDasharray="2 1" />
            <path d="M12 2l3 4 2-4" stroke="#8a9a20" strokeWidth="1.500" /><path d="M17 3h3v6" strokeDasharray="1 1" />
            <path d="M26 2h3v3h-3zM31 2h3v3h-3zM26 7h3v3h-3zM31 7h3v3h-3z" fill="#999" />
            <path d="M37 2l9 7M46 2l-9 7" stroke="#a33a5a" /><path d="M37 6h9" />
            <path d="M50 5h6v4h-6zM52 2h6v5h-6zM50 5l2-3" />
            <path d="M62 4h6v5h-6z" fill="#444" /><path d="M62 4l2-2h6v5l-2 2M68 4l2-2" />
            <path d="M74 4h6v5h-6zM74 4l2-2h6v5l-2 2" />
          </svg>
          <Grow />
          <StatusCell $w={144} $pad={0}><Led />Results (FEM): available</StatusCell>
          <StatusCell $w={53} $pad={28}>24</StatusCell>
          <StatusCell $w={54} $pad={8}>
            <svg width="9" height="9" viewBox="0 0 9 9" fill="none" stroke="#444"><path d="M0 7.500h9M1 7V2h3v5M5 3h3v4M1 4h3" /></svg>22
          </StatusCell>
          <StatusCell $w={101} $pad={5}>TH30_CONCR</StatusCell>
          <StatusCell $w={126}>
            <svg width="9" height="9" viewBox="0 0 9 9" fill="none" stroke="#555"><path d="M1 1v7M7 1v7" strokeDasharray="2 1" /><path d="M0 8h9" stroke="#833" /></svg>x=12,77; y=1,68; z=5,58
          </StatusCell>
          <StatusCell $w={73} $pad={8}>
            <svg width="9" height="9" viewBox="0 0 9 9" fill="none" stroke="#333"><path d="M0 3h9M1 6h7" strokeWidth="1.300" /><path d="M0 8l2-2M9 8L7 6" /></svg>0,00
          </StatusCell>
          <StatusCell $w={62} $pad={2}>[m] [kN] [Deg]</StatusCell>
        </StatusLine>
      </StatusArea>
    </Page>
  );
}
